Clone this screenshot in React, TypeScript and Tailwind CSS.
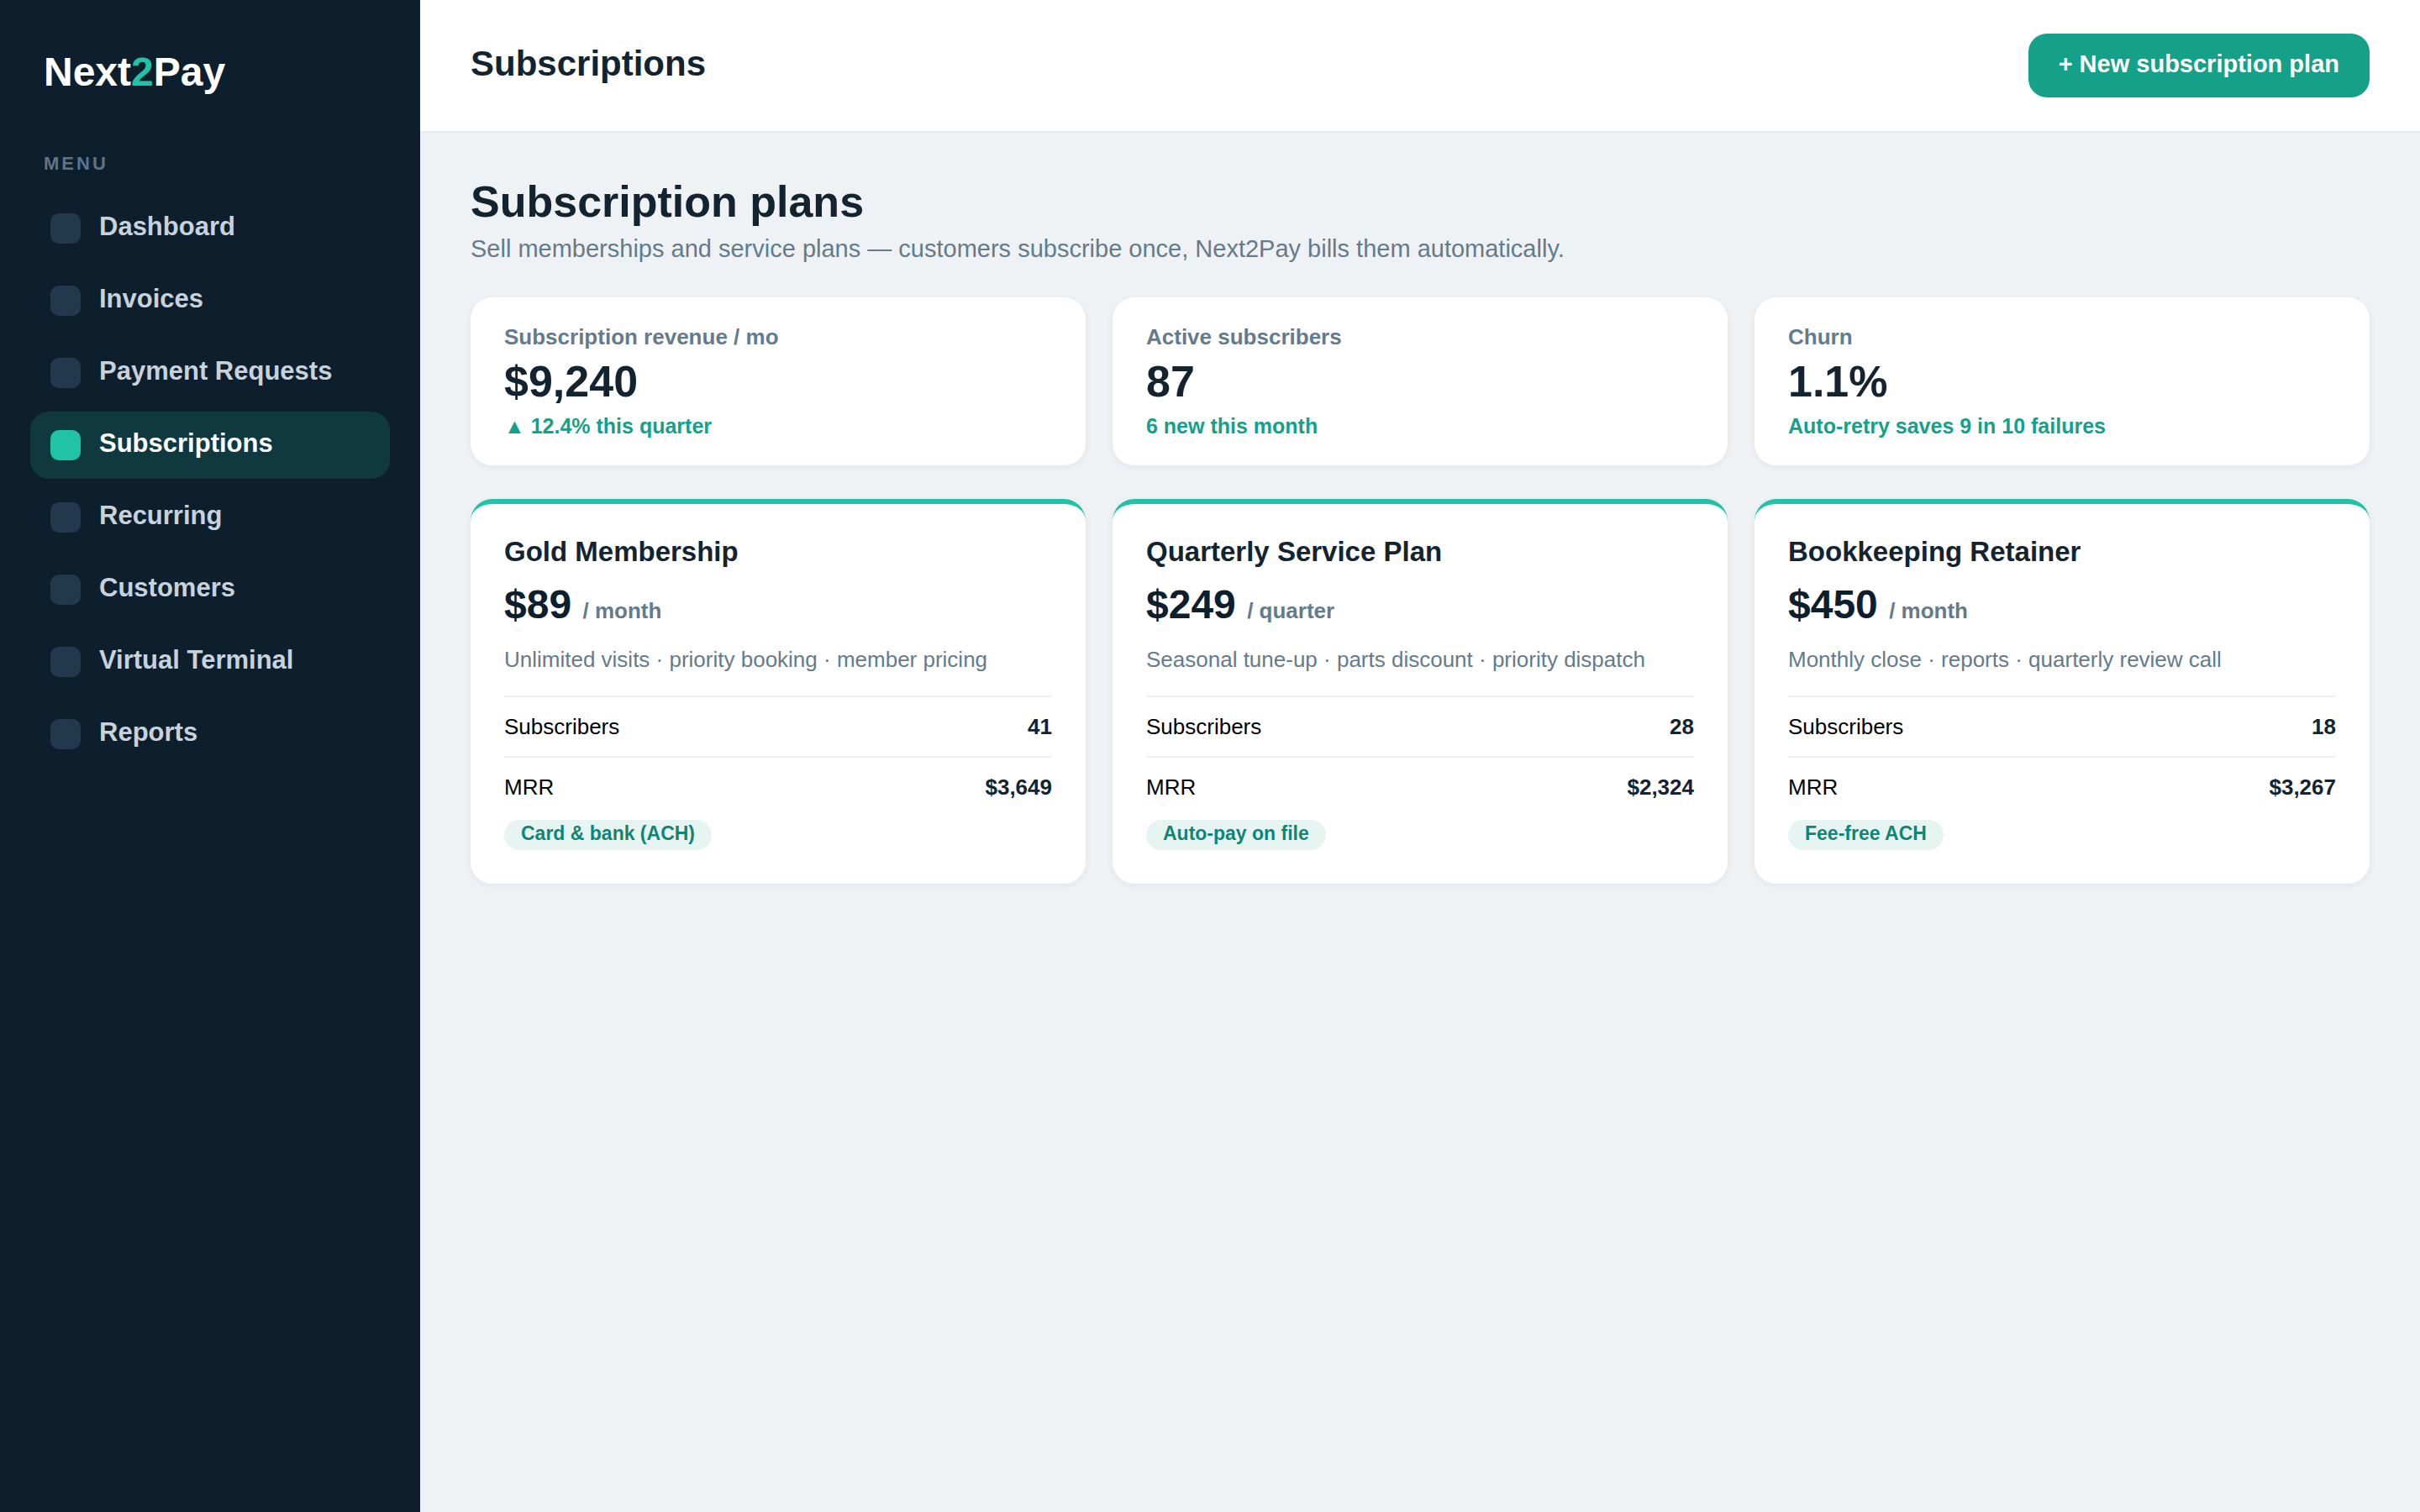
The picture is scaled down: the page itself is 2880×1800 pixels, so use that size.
const navItems = [
	"Dashboard",
	"Invoices",
	"Payment Requests",
	"Subscriptions",
	"Recurring",
	"Customers",
	"Virtual Terminal",
	"Reports",
];

const stats = [
	{
		label: "Subscription revenue / mo",
		value: "$9,240",
		note: "▲ 12.4% this quarter",
	},
	{ label: "Active subscribers", value: "87", note: "6 new this month" },
	{ label: "Churn", value: "1.1%", note: "Auto-retry saves 9 in 10 failures" },
];

type Plan = {
	name: string;
	price: string;
	period: string;
	description: string;
	subscribers: string;
	mrr: string;
	tag: string;
};

const plans: Plan[] = [
	{
		name: "Gold Membership",
		price: "$89",
		period: "/ month",
		description: "Unlimited visits · priority booking · member pricing",
		subscribers: "41",
		mrr: "$3,649",
		tag: "Card & bank (ACH)",
	},
	{
		name: "Quarterly Service Plan",
		price: "$249",
		period: "/ quarter",
		description: "Seasonal tune-up · parts discount · priority dispatch",
		subscribers: "28",
		mrr: "$2,324",
		tag: "Auto-pay on file",
	},
	{
		name: "Bookkeeping Retainer",
		price: "$450",
		period: "/ month",
		description: "Monthly close · reports · quarterly review call",
		subscribers: "18",
		mrr: "$3,267",
		tag: "Fee-free ACH",
	},
];

export default function App() {
	return (
		<div className="flex w-[2880px] h-[1800px] overflow-hidden bg-[#eef2f5] text-[#132430] font-['Liberation_Sans',Arial,sans-serif]">
			<Sidebar active="Subscriptions" />
			<main className="flex-1 min-w-0">
				<header className="flex items-center justify-between h-[158px] px-[60px] bg-white border-b-2 border-[#e3eaf0]">
					<h1 className="pb-[5px] text-[42px] leading-[48px] font-bold">
						Subscriptions
					</h1>
					<button
						type="button"
						className="px-9 pt-5 pb-6 rounded-[22px] bg-[#15a08a] text-white text-[29px] leading-[32px] font-bold"
					>
						+ New subscription plan
					</button>
				</header>

				<div className="px-[60px] pt-[52px]">
					<h2 className="text-[52px] leading-[60px] font-bold">
						Subscription plans
					</h2>
					<p className="mt-2.5 text-[29px] leading-[32px] text-[#647b8b]">
						Sell memberships and service plans — customers subscribe once,
						Next2Pay bills them automatically.
					</p>

					<div className="grid grid-cols-3 gap-8 mt-[42px]">
						{stats.map((stat) => (
							<div
								key={stat.label}
								className="h-[200px] px-10 pt-8 rounded-[26px] bg-white shadow-[0_2px_8px_rgba(13,31,45,0.06)]"
							>
								<p className="text-[26px] leading-[30px] font-bold text-[#647b8b]">
									{stat.label}
								</p>
								<p className="mt-2 text-[52px] leading-[60px] font-bold">
									{stat.value}
								</p>
								<p className="mt-[9px] text-[25px] leading-[28px] font-bold text-[#15a08a]">
									{stat.note}
								</p>
							</div>
						))}
					</div>

					<div className="grid grid-cols-3 gap-8 mt-10">
						{plans.map((plan) => (
							<PlanCard key={plan.name} plan={plan} />
						))}
					</div>
				</div>
			</main>
		</div>
	);
}

function Sidebar({ active }: { active: string }) {
	return (
		<aside className="w-[500px] shrink-0 px-9 pt-[59px] bg-[#0d1f2d]">
			<p className="px-4 text-[48px] leading-[54px] font-bold text-white">
				Next<span className="text-[#20c3a8]">2</span>Pay
			</p>
			<p className="mt-[69px] px-4 text-[22px] leading-[25px] font-bold tracking-[3px] text-[#5f7488]">
				MENU
			</p>
			<nav className="mt-[25px] flex flex-col gap-1.5">
				{navItems.map((item) => (
					<NavItem key={item} label={item} active={item === active} />
				))}
			</nav>
		</aside>
	);
}

function NavItem({ label, active }: { label: string; active: boolean }) {
	return (
		<a
			className={`flex items-center gap-[22px] h-20 px-6 rounded-[22px] text-[31px] leading-[36px] font-bold ${
				active ? "bg-[#10393f] text-white" : "text-[#c7d2dc]"
			}`}
		>
			<span
				className={`size-9 rounded-[10px] ${active ? "bg-[#20c3a8]" : "bg-[#22384c]"}`}
			/>
			<span className="pb-[5px]">{label}</span>
		</a>
	);
}

function PlanCard({ plan }: { plan: Plan }) {
	return (
		<div className="h-[458px] px-10 pt-[38px] rounded-[26px] bg-white border-t-[6px] border-[#20c3a8] shadow-[0_2px_8px_rgba(13,31,45,0.06)]">
			<h3 className="text-[33px] leading-[38px] font-bold">{plan.name}</h3>
			<p className="mt-[17px] text-[48px] leading-[54px] font-bold text-[#0d1f2d]">
				{plan.price}{" "}
				<span className="text-[26px] leading-none text-[#647b8b]">
					{plan.period}
				</span>
			</p>
			<p className="mt-[23px] text-[26px] leading-[30px] text-[#647b8b]">
				{plan.description}
			</p>
			<div className="mt-7">
				<PlanRow label="Subscribers" value={plan.subscribers} />
				<PlanRow label="MRR" value={plan.mrr} />
			</div>
			<span className="flex w-fit h-9 mt-1 px-5 rounded-full bg-[#e7f5f2] text-[23px] leading-[32px] font-bold text-[#0f8573]">
				{plan.tag}
			</span>
		</div>
	);
}

function PlanRow({ label, value }: { label: string; value: string }) {
	return (
		<div className="flex justify-between h-[72px] pt-5 border-t-2 border-[#eef2f5] text-[26px] leading-[30px] text-black">
			<span>{label}</span>
			<b className="text-[#132430]">{value}</b>
		</div>
	);
}
